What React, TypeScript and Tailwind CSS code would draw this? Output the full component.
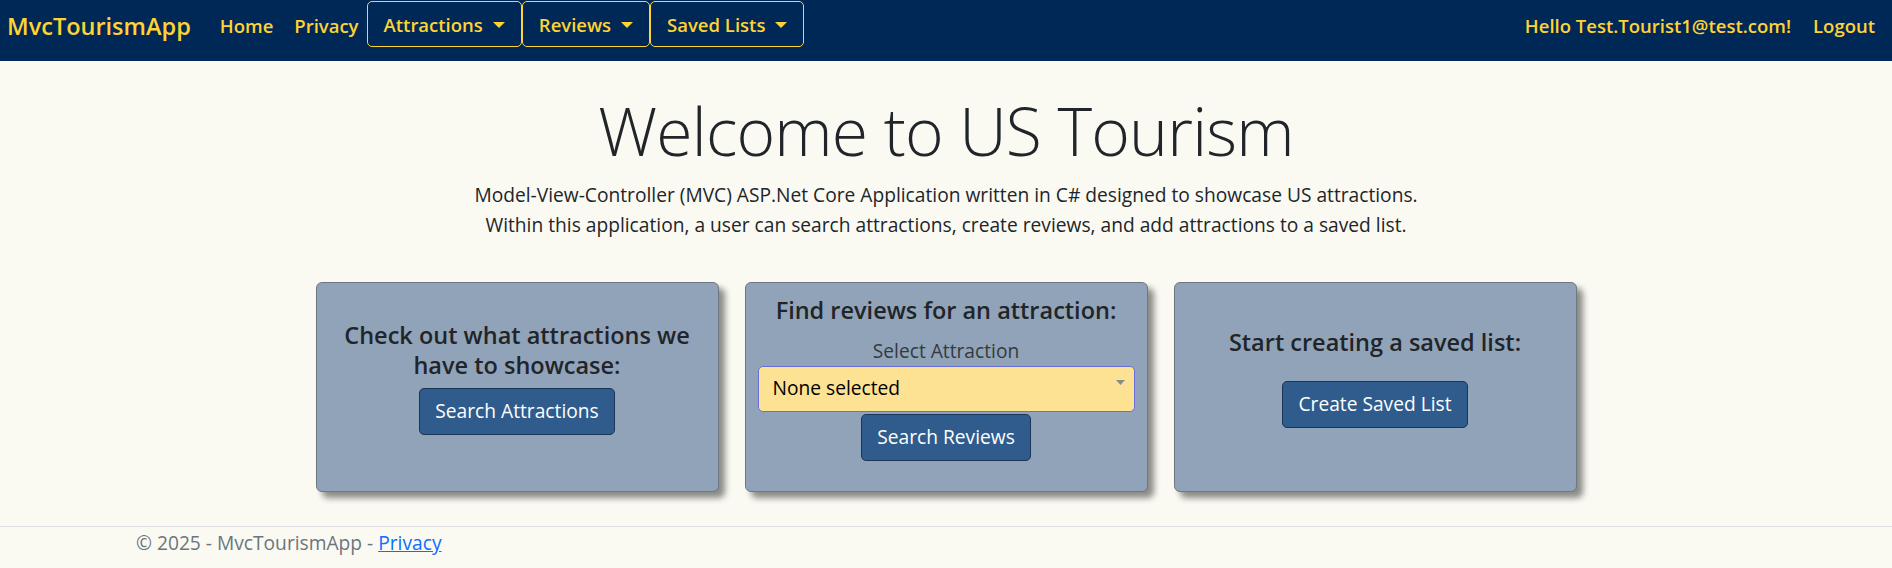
import { useState } from "react";

const font = "font-['Open_Sans',sans-serif]";

const Caret = () => (
  <span className="ml-[10px] inline-block h-0 w-0 border-x-[6px] border-t-[6px] border-x-transparent border-t-[#ffd333]"></span>
);

const NavDropdown = ({ label }: { label: string }) => (
  <button className="flex h-[46px] items-center rounded-[5px] border border-[#ffd333] px-[16px] pt-[2px] text-[18.5px] font-semibold text-[#ffd333]">
    {label}
    <Caret />
  </button>
);

const Navbar = () => (
  <nav className="flex h-[61px] items-start justify-between bg-[#002856]">
    <div className="flex items-start">
      <a className="flex h-[54px] items-center pl-[7px] text-[23.5px] font-semibold text-[#ffd333]">MvcTourismApp</a>
      <a className="ml-[29px] flex h-[52px] items-center text-[18.5px] font-semibold text-[#ffd333]">Home</a>
      <a className="ml-[21px] flex h-[52px] items-center text-[18.5px] font-semibold text-[#ffd333]">Privacy</a>
      <div className="ml-[8px] mt-[1px] flex">
        <NavDropdown label="Attractions" />
        <NavDropdown label="Reviews" />
        <NavDropdown label="Saved Lists" />
      </div>
    </div>
    <div className="flex items-start pr-[17px]">
      <span className="flex h-[52px] items-center text-[18.5px] font-semibold text-[#ffd333]">Hello Test.Tourist1@test.com!</span>
      <a className="ml-[22px] flex h-[52px] items-center text-[18.5px] font-semibold text-[#ffd333]">Logout</a>
    </div>
  </nav>
);

const Card = ({ children }: { children: React.ReactNode }) => (
  <div className="flex h-[210px] w-[403px] flex-col items-center justify-center rounded-[6px] border border-[#6f7780] bg-[#91a3b8] px-[12px] pb-[19px] text-center shadow-[6px_6px_6px_rgba(0,0,0,0.45)]">
    {children}
  </div>
);

const BlueButton = ({ label }: { label: string }) => (
  <button className="h-[47px] rounded-[5px] border border-[#1a3556] bg-[#2f5c8c] px-[15px] text-[19.2px] text-white">
    {label}
  </button>
);

export default function App() {
  const [selected, setSelected] = useState("");

  return (
    <div className={`${font} min-h-[568px] bg-[#fafaf3] text-[#212529]`}>
      <Navbar />

      <main className="flex flex-col items-center">
        <h1 className="mt-[27px] text-[66px] font-light leading-[84px] tracking-[-0.8px]">Welcome to US Tourism</h1>
        <p className="mt-[8px] text-center text-[19.2px] leading-[30px]">
          Model-View-Controller (MVC) ASP.Net Core Application written in C# designed to showcase US attractions.
          <br />
          Within this application, a user can search attractions, create reviews, and add attractions to a saved list.
        </p>

        <div className="mt-[42px] flex gap-[26px]">
          <Card>
            <h5 className="mb-[8px] text-[23.5px] font-semibold leading-[30px]">
              Check out what attractions we
              <br />
              have to showcase:
            </h5>
            <BlueButton label="Search Attractions" />
          </Card>

          <Card>
            <h5 className="mb-[11px] text-[23.5px] font-semibold leading-[30px]">Find reviews for an attraction:</h5>
            <label className="text-[19.2px] leading-[30px] text-[#343a40]">Select Attraction</label>
            <div className="relative w-full">
              <select
                value={selected}
                onChange={(e) => setSelected(e.target.value)}
                className="h-[46px] w-full appearance-none rounded-[5px] border border-[#6a6fd8] bg-[#fde293] px-[14px] text-[19.2px] text-black outline-none"
              >
                <option value="">None selected</option>
              </select>
              <svg className="pointer-events-none absolute right-[10px] top-[14px]" width="9" height="5" viewBox="0 0 9 5">
                <path d="M0 0h9L4.5 5z" fill="#8a8a8a" />
              </svg>
            </div>
            <div className="mt-[2px]">
              <BlueButton label="Search Reviews" />
            </div>
          </Card>

          <Card>
            <h5 className="mb-[24px] text-[23.5px] font-semibold leading-[30px]">Start creating a saved list:</h5>
            <BlueButton label="Create Saved List" />
          </Card>
        </div>
      </main>

      <footer className="mt-[34px] border-t border-[#dee2e6]">
        <div className="pl-[136px] text-[19.2px] leading-[32px] text-[#6c757d]">
          © 2025 - MvcTourismApp - <a className="text-[#0d6efd] underline">Privacy</a>
        </div>
      </footer>
    </div>
  );
}
